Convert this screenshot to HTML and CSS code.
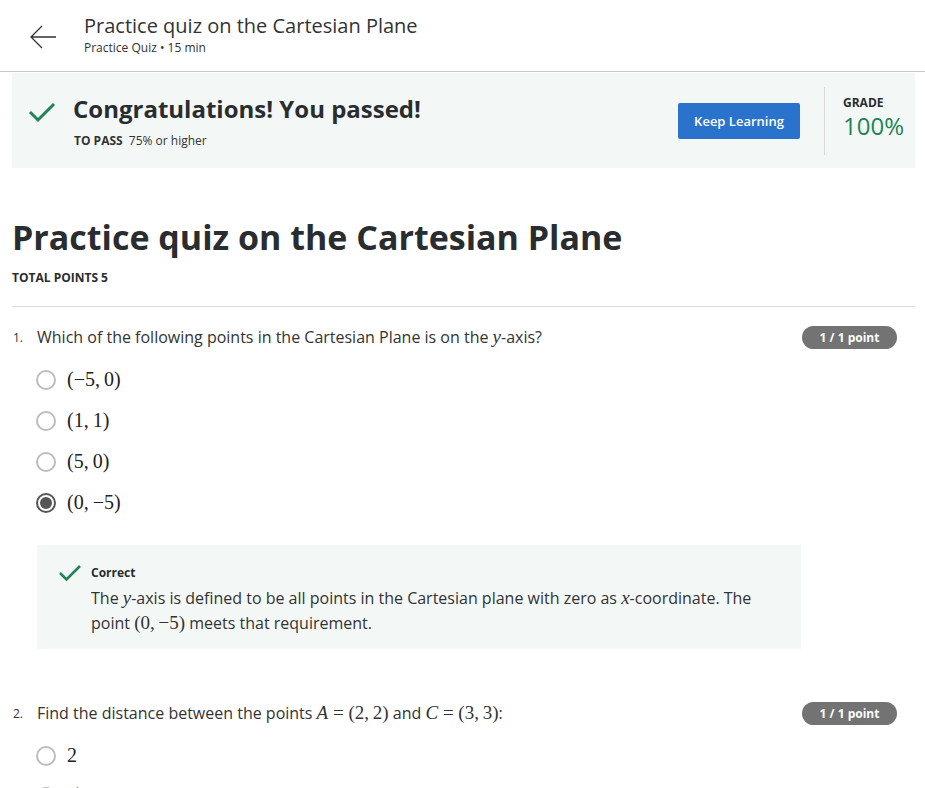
FILE: index.html
```html
<!DOCTYPE html>
<html lang="en">
<head>
<meta charset="utf-8">
<title>Practice quiz on the Cartesian Plane</title>
<link rel="stylesheet" href="styles.css">
</head>
<body>
<header class="top">
  <a class="back" aria-label="Back">
    <svg width="28" height="26" viewBox="0 0 28 26"><path d="M27 13H2M13 2L2 13l11 11" fill="none" stroke="#333" stroke-width="1.3"/></svg>
  </a>
  <div class="top-titles">
    <div class="top-title">Practice quiz on the Cartesian Plane</div>
    <div class="top-sub">Practice Quiz • 15 min</div>
  </div>
</header>

<main class="page">
  <section class="banner">
    <div class="banner-left">
      <div class="banner-head">
        <svg class="check-lg" width="28" height="22" viewBox="0 0 28 22"><path d="M2 11l8 8L26 3" fill="none" stroke="#1f8354" stroke-width="3"/></svg>
        <h2 class="banner-title">Congratulations! You passed!</h2>
      </div>
      <div class="pass"><b>TO PASS</b> 75% or higher</div>
    </div>
    <button class="btn">Keep Learning</button>
    <div class="divider"></div>
    <div class="grade">
      <div class="grade-label">GRADE</div>
      <div class="grade-val">100%</div>
    </div>
  </section>

  <h1 class="quiz-title">Practice quiz on the Cartesian Plane</h1>
  <div class="total">TOTAL POINTS 5</div>
  <hr class="rule">

  <section class="question">
    <div class="q-head">
      <span class="q-num">1.</span>
      <span class="q-text">Which of the following points in the Cartesian Plane is on the <i class="m">y</i>-axis?</span>
      <span class="badge">1 / 1 point</span>
    </div>
    <ul class="options">
      <li><span class="radio"></span><span class="mth">(−5,&#8201;0)</span></li>
      <li><span class="radio"></span><span class="mth">(1,&#8201;1)</span></li>
      <li><span class="radio"></span><span class="mth">(5,&#8201;0)</span></li>
      <li><span class="radio on"></span><span class="mth">(0,&#8201;−5)</span></li>
    </ul>
    <div class="feedback">
      <svg class="check-sm" width="24" height="18" viewBox="0 0 24 18"><path d="M2 9l6.5 6.5L22 2" fill="none" stroke="#1f8354" stroke-width="2.5"/></svg>
      <div class="fb-body">
        <div class="fb-label">Correct</div>
        <p class="fb-text">The <i class="m">y</i>-axis is defined to be all points in the Cartesian plane with zero as <i class="m">x</i>-coordinate. The point <span class="mi">(0,&#8201;−5)</span> meets that requirement.</p>
      </div>
    </div>
  </section>

  <section class="question q2">
    <div class="q-head">
      <span class="q-num">2.</span>
      <span class="q-text">Find the distance between the points <span class="mi"><i>A</i> = (2,&#8201;2)</span> and <span class="mi"><i>C</i> = (3,&#8201;3)</span>:</span>
      <span class="badge">1 / 1 point</span>
    </div>
    <ul class="options">
      <li><span class="radio"></span><span class="mth">2</span></li>
      <li><span class="radio"></span><span class="mth">√2</span></li>
    </ul>
  </section>
</main>
</body>
</html>
```

FILE: styles.css
```css
* { box-sizing: border-box; }
html, body { margin: 0; padding: 0; background: #fff; }
body {
  font-family: "Open Sans", "Noto Sans", sans-serif;
  color: #373a3c;
  width: 925px;
  overflow: hidden;
  height: 788px;
}

.top {
  display: flex;
  align-items: flex-start;
  height: 72px;
  border-bottom: 1px solid #c8c8c8;
  padding: 22px 0 0 29px;
}
.back { display: block; margin-top: 2px; width: 28px; }
.top-titles { margin-left: 27px; }
.top-title { font-size: 20px; line-height: 24px; color: #333; margin-top: -8px; }
.top-sub { font-size: 12px; line-height: 16px; color: #333; margin-top: 2px; }

.page { padding: 0 10px 0 12px; }

.banner {
  margin-top: 1px;
  background: #f3f8f7;
  height: 95px;
  display: flex;
  align-items: center;
  padding: 0 6px 0 16px;
}
.banner-left { flex: 1; padding-top: 0; }
.banner-head { display: flex; align-items: center; }
.check-lg { margin-right: 17px; margin-top: 6px; }
.banner-title {
  margin: 0;
  font-size: 24px;
  font-weight: 700;
  color: #2a2d30;
  line-height: 32px;
}
.pass { font-size: 12px; color: #333; margin: 7px 0 0 46px; }
.pass b { margin-right: 3px; }

.btn {
  background: #2a73cc;
  color: #fff;
  border: 0;
  border-radius: 2px;
  font-family: inherit;
  font-size: 13px;
  font-weight: 600;
  width: 122px;
  height: 36px;
  padding: 0;
  margin-right: 24px;
}
.divider { width: 1px; height: 68px; background: #dadada; align-self: center; }
.grade { margin-left: 18px; width: 66px; margin-top: -6px; }
.grade-label { font-size: 12px; font-weight: 700; color: #2a2d30; line-height: 16px; }
.grade-val { font-size: 24px; color: #1f8354; line-height: 30px; }

.quiz-title {
  margin: 46px 0 0 0;
  font-size: 34px;
  line-height: 46px;
  font-weight: 700;
  color: #2a2d30;
}
.total { font-size: 12px; font-weight: 700; color: #2a2d30; margin-top: 9px; }
.rule { border: 0; border-top: 1px solid #dcdcdc; margin: 20px 0 0 0; }

.question { padding-top: 18px; }
.q-head { display: flex; align-items: center; height: 24px; }
.q-num { width: 25px; font-size: 12px; color: #333; padding-left: 1px; }
.q-text { flex: 1; font-size: 16px; color: #333; }
.badge {
  background: #737373;
  color: #fff;
  font-size: 12px;
  font-weight: 700;
  border-radius: 12px;
  width: 95px;
  height: 23px;
  line-height: 23px;
  text-align: center;
  margin-right: 18px;
}
.m { font-family: "Liberation Serif", "DejaVu Serif", serif; font-size: 19px; line-height: 1; }
.mi { font-family: "Liberation Serif", "DejaVu Serif", serif; font-size: 19px; line-height: 1; }
.mi i { font-style: italic; }

.options { list-style: none; margin: 10px 0 0 0; padding: 0 0 0 24px; }
.options li { display: flex; align-items: center; height: 41px; }
.radio {
  width: 20px;
  height: 20px;
  border: 2px solid #bdbdbd;
  border-radius: 50%;
  margin-right: 11px;
  position: relative;
  flex: none;
}
.radio.on { border-color: #555; }
.radio.on::after {
  content: "";
  position: absolute;
  left: 2px; top: 2px;
  width: 12px; height: 12px;
  border-radius: 50%;
  background: #555;
}
.mth { font-family: "Liberation Serif", "DejaVu Serif", serif; font-size: 20px; color: #222; }

.feedback {
  margin: 22px 114px 0 25px;
  background: #f3f8f7;
  height: 104px;
  display: flex;
  padding: 19px 0 0 21px;
}
.check-sm { margin-top: 0; margin-right: 9px; flex: none; }
.fb-label { font-size: 12px; font-weight: 700; color: #2a2d30; line-height: 18px; }
.fb-text { margin: 4px 20px 0 0; font-size: 16px; line-height: 25px; color: #333; }

.q2 { padding-top: 52px; }
.q2 .options { margin-top: 10px; }
```
